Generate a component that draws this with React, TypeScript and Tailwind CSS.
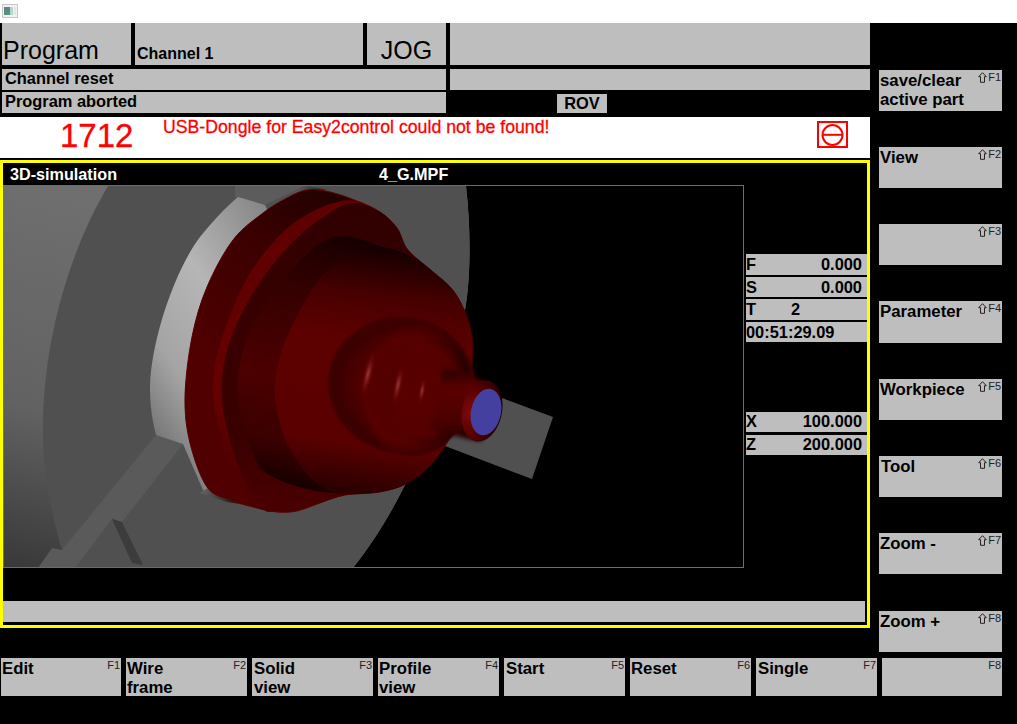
import React from 'react';

const font = 'font-["Liberation_Sans",Arial,sans-serif]';

const sideKeys = [
  { tag: 'F1', lines: ['save/clear', 'active part'], box: 'mt-[47px] h-[41px] pl-px' },
  { tag: 'F2', lines: ['View'], box: 'mt-[36px] h-[41px] pl-px' },
  { tag: 'F3', lines: [], box: 'mt-[36px] h-[41px] pl-px' },
  { tag: 'F4', lines: ['Parameter'], box: 'mt-[36px] h-[42px] pl-px' },
  { tag: 'F5', lines: ['Workpiece'], box: 'mt-[36px] h-[41px] pl-px' },
  { tag: 'F6', lines: ['Tool'], box: 'mt-[36px] h-[41px] pl-[2px]' },
  { tag: 'F7', lines: ['Zoom -'], box: 'mt-[36px] h-[41px] pl-px' },
  { tag: 'F8', lines: ['Zoom +'], box: 'mt-[37px] h-[41px] pl-px' },
];

const bottomKeys = [
  { tag: 'F1', lines: ['Edit'], box: 'w-[120px] pl-px' },
  { tag: 'F2', lines: ['Wire', 'frame'], box: 'w-[121px] pl-px' },
  { tag: 'F3', lines: ['Solid', 'view'], box: 'w-[121px] pl-[2px]' },
  { tag: 'F4', lines: ['Profile', 'view'], box: 'w-[121px] pl-px' },
  { tag: 'F5', lines: ['Start'], box: 'w-[121px] pl-[2px]' },
  { tag: 'F6', lines: ['Reset'], box: 'w-[121px] pl-px' },
  { tag: 'F7', lines: ['Single'], box: 'w-[121px] pl-[2px]' },
  { tag: 'F8', lines: [], box: 'w-[120px] pl-px' },
];

// closed smooth outline through the given points (catmull-rom)
const smooth = (pts: number[][]) => {
  const n = pts.length;
  let d = `M${pts[0][0]} ${pts[0][1]}`;
  for (let i = 0; i < n; i++) {
    const p0 = pts[(i - 1 + n) % n];
    const p1 = pts[i];
    const p2 = pts[(i + 1) % n];
    const p3 = pts[(i + 2) % n];
    const c1x = p1[0] + (p2[0] - p0[0]) / 6;
    const c1y = p1[1] + (p2[1] - p0[1]) / 6;
    const c2x = p2[0] - (p3[0] - p1[0]) / 6;
    const c2y = p2[1] - (p3[1] - p1[1]) / 6;
    d += ` C${c1x} ${c1y} ${c2x} ${c2y} ${p2[0]} ${p2[1]}`;
  }
  return d + ' Z';
};

const flangePts = [[307, 190], [330, 192], [357, 201], [380, 212], [397, 228], [408, 250], [432, 271], [455, 293], [470, 327], [472, 363], [465, 397], [450, 437], [430, 465], [408, 483], [380, 492], [345, 495], [320, 503], [297, 511], [277, 512], [257, 508], [230, 500], [207, 487], [190, 443], [185, 397], [192, 337], [207, 287], [233, 240], [263, 213], [287, 198]];
const stripPts = [[337, 202], [357, 201], [380, 212], [397, 228], [408, 250], [432, 271], [455, 293], [470, 327], [472, 363], [450, 437], [408, 483], [345, 495], [297, 510], [277, 511], [253, 505], [233, 473], [217, 420], [213, 380], [223, 335], [247, 278], [280, 235], [310, 213]];
const bandPts = [[352, 203], [380, 212], [397, 228], [408, 250], [432, 271], [455, 293], [470, 327], [472, 363], [450, 437], [408, 483], [345, 495], [297, 510], [277, 511], [262, 508], [240, 470], [225, 420], [222, 380], [232, 335], [260, 282], [293, 242], [322, 218]];
const innerPts = [[343, 236], [377, 245], [410, 262], [440, 300], [472, 363], [450, 437], [408, 483], [333, 493], [273, 477], [253, 453], [237, 393], [248, 335], [267, 302], [290, 272], [318, 245]];
const conePts = [[380, 247], [350, 254], [322, 276], [300, 310], [284, 345], [276, 375], [276, 405], [287, 443], [310, 477], [337, 493], [380, 492], [408, 483], [430, 465], [450, 437], [465, 397], [472, 363], [470, 327], [455, 293], [432, 271], [408, 255]];

const ShiftArrow = () => (
  <svg className="mr-px" width="9" height="11" viewBox="0 0 9 11">
    <path d="M4.5 0.7 L8.3 4.7 H6.5 V10.3 H2.5 V4.7 H0.7 Z" fill="none" stroke="#222" strokeWidth="1" />
  </svg>
);

const SoftKey: React.FC<{ tag: string; lines: string[]; box: string; shift?: boolean }> = ({ tag, lines, box, shift }) => (
  <div className={`relative bg-[#bebebe] pt-px text-[16.8px] font-bold leading-[19px] text-black ${box}`}>
    {lines.map(l => (
      <div key={l}>{l}</div>
    ))}
    <div className="absolute right-px top-px flex items-center text-[11px] font-normal leading-[12px] text-[#222]">
      {shift && <ShiftArrow />}
      {tag}
    </div>
  </div>
);

const DataRow: React.FC<{ name: string; value?: string; box: string }> = ({ name, value, box }) => (
  <div className={`flex items-center justify-between bg-[#bebebe] pr-[5px] text-[16.4px] font-bold text-black ${box}`}>
    <span>{name}</span>
    <span>{value}</span>
  </div>
);

const Scene = () => (
  <svg className="block" width="739" height="381" viewBox="4 186 739 381">
    <defs>
      <linearGradient id="outer" x1="0.3" y1="0" x2="0" y2="1">
        <stop offset="0" stopColor="#707070" />
        <stop offset="0.6" stopColor="#626262" />
        <stop offset="1" stopColor="#383838" />
      </linearGradient>
      <linearGradient id="ring" x1="0.95" y1="0" x2="0.25" y2="1">
        <stop offset="0" stopColor="#7c7c7c" />
        <stop offset="0.45" stopColor="#b6b6b6" />
        <stop offset="0.75" stopColor="#a4a4a4" />
        <stop offset="1" stopColor="#707070" />
      </linearGradient>
      <linearGradient id="wedge" x1="0" y1="0" x2="1" y2="0.2">
        <stop offset="0" stopColor="#6a6a6a" />
        <stop offset="1" stopColor="#1c1c1c" />
      </linearGradient>
      <linearGradient id="flange" x1="0.65" y1="0" x2="0.2" y2="0.6">
        <stop offset="0" stopColor="#1a0000" />
        <stop offset="0.5" stopColor="#3c0000" />
        <stop offset="1" stopColor="#500000" />
      </linearGradient>
      <linearGradient id="strip" x1="0.5" y1="0" x2="0.5" y2="1">
        <stop offset="0" stopColor="#5e0000" />
        <stop offset="0.6" stopColor="#660000" />
        <stop offset="0.85" stopColor="#520000" />
        <stop offset="1" stopColor="#4a0000" />
      </linearGradient>
      <linearGradient id="band" x1="0.5" y1="0" x2="0.4" y2="1">
        <stop offset="0" stopColor="#300000" />
        <stop offset="0.4" stopColor="#380000" />
        <stop offset="0.8" stopColor="#3a0000" />
        <stop offset="1" stopColor="#4a0000" />
      </linearGradient>
      <linearGradient id="inner" x1="0.6" y1="0" x2="0.4" y2="1">
        <stop offset="0" stopColor="#140000" />
        <stop offset="0.25" stopColor="#340000" />
        <stop offset="0.6" stopColor="#4c0000" />
        <stop offset="0.85" stopColor="#3a0000" />
        <stop offset="1" stopColor="#180000" />
      </linearGradient>
      <linearGradient id="cone" x1="0.55" y1="0" x2="0.45" y2="1">
        <stop offset="0" stopColor="#140000" />
        <stop offset="0.2" stopColor="#480000" />
        <stop offset="0.38" stopColor="#5e0000" />
        <stop offset="0.8" stopColor="#5a0000" />
        <stop offset="1" stopColor="#2a0000" />
      </linearGradient>
      <radialGradient id="dish" cx="0.5" cy="0.5" r="0.5">
        <stop offset="0" stopColor="#500000" />
        <stop offset="0.45" stopColor="#5a0000" />
        <stop offset="0.75" stopColor="#440000" />
        <stop offset="0.9" stopColor="#3a0000" />
        <stop offset="1" stopColor="#3e0000" />
      </radialGradient>
      <radialGradient id="ridge1" cx="0.42" cy="0.5" r="0.72">
        <stop offset="0" stopColor="#500000" />
        <stop offset="0.55" stopColor="#560000" />
        <stop offset="0.72" stopColor="#3c0000" />
        <stop offset="0.85" stopColor="#1c0000" />
      </radialGradient>
      <radialGradient id="ridge2" cx="0.35" cy="0.5" r="0.72">
        <stop offset="0" stopColor="#5a0000" />
        <stop offset="0.6" stopColor="#560000" />
        <stop offset="0.76" stopColor="#3a0000" />
        <stop offset="0.9" stopColor="#1a0000" />
      </radialGradient>
      <linearGradient id="neck" x1="0.2" y1="0" x2="0.3" y2="1">
        <stop offset="0" stopColor="#240000" />
        <stop offset="0.3" stopColor="#5a0000" />
        <stop offset="0.75" stopColor="#4a0000" />
        <stop offset="1" stopColor="#200000" />
      </linearGradient>
      <radialGradient id="rim" cx="0.2" cy="0.55" r="0.85">
        <stop offset="0" stopColor="#7c0a0a" />
        <stop offset="0.45" stopColor="#5a0000" />
        <stop offset="1" stopColor="#1c0000" />
      </radialGradient>
      <radialGradient id="shine" cx="0.5" cy="0.5" r="0.5">
        <stop offset="0" stopColor="#9a3a3a" />
        <stop offset="0.5" stopColor="#7a1414" stopOpacity="0.6" />
        <stop offset="1" stopColor="#600000" stopOpacity="0" />
      </radialGradient>
      <filter id="soft" x="-20%" y="-20%" width="140%" height="140%">
        <feGaussianBlur stdDeviation="2" />
      </filter>
      <filter id="softer" x="-20%" y="-20%" width="140%" height="140%">
        <feGaussianBlur stdDeviation="1" />
      </filter>
    </defs>

    {/* tool */}
    <polygon points="502,398 553,417 532,479 445,446 470,400" fill="#505050" />

    {/* chuck body */}
    <path d="M3 186 L466 186 C472 240 470 290 463 320 C445 410 400 510 353 568 L3 568 Z" fill="url(#outer)" />
    <path d="M108 186 L466 186 C472 240 470 290 463 320 C445 410 400 510 353 568 L75 568 L62 550 C47 500 43 460 43 430 C43 340 70 250 108 186 Z" fill="#505050" />

    {/* jaws */}
    <polygon points="235,186 305,186 264,205 235,197" fill="#5c5c5c" />
    <polygon points="293,193 307,186 327,190" fill="url(#wedge)" />
    <polygon points="156,435 183,444 122,522 112,519 75,568 38,568 52,548 62,550" fill="#5a5a5a" />
    <polygon points="112,519 122,522 143,565 132,563" fill="#3c3c3c" />

    {/* light ring */}
    <path d="M238 197 L265 205 L290 260 L230 460 L210 495 L203 490 L183 444 L156 435 C151 415 150 400 150 387 C151 340 175 270 200 237 C212 222 225 208 238 197 Z" fill="url(#ring)" />
    <polygon points="200,493 208,488 240,504 227,502" fill="url(#wedge)" />

    {/* workpiece, back to front */}
    <path d={smooth(flangePts)} fill="url(#flange)" stroke="#5c0000" strokeWidth="1" />
    <path d={smooth(stripPts)} fill="url(#strip)" />
    <path d={smooth(bandPts)} fill="url(#band)" />
    <path d={smooth(innerPts)} fill="url(#inner)" />
    <path d={smooth(conePts)} fill="url(#cone)" />

    {/* rounded nose */}
    <ellipse cx="402" cy="385" rx="74" ry="68" transform="rotate(8 402 385)" fill="url(#dish)" filter="url(#softer)" />
    <ellipse cx="416" cy="390" rx="54" ry="66" transform="rotate(8 416 390)" fill="url(#ridge1)" filter="url(#softer)" />
    <ellipse cx="432" cy="392" rx="38" ry="52" transform="rotate(8 432 392)" fill="url(#ridge2)" filter="url(#softer)" />
    <ellipse cx="368" cy="374" rx="5" ry="24" transform="rotate(14 368 374)" fill="url(#shine)" />
    <ellipse cx="398" cy="385" rx="4.5" ry="21" transform="rotate(12 398 385)" fill="url(#shine)" />
    <ellipse cx="422" cy="391" rx="3.5" ry="13" transform="rotate(10 422 391)" fill="url(#shine)" />

    <path d="M444 368 C455 370 470 375 490 384 L482 441 C465 440 450 434 430 428 Z" fill="url(#neck)" filter="url(#soft)" />
    <ellipse cx="482" cy="411" rx="20" ry="31" transform="rotate(12 482 411)" fill="url(#rim)" />
    <ellipse cx="486" cy="412" rx="15" ry="23.5" transform="rotate(12 486 412)" fill="#44409f" />
  </svg>
);

export default function App() {
  return (
    <div className={`flex h-[724px] w-[1017px] flex-col overflow-hidden bg-black ${font}`}>
      {/* window title bar */}
      <div className="flex h-[23px] items-start bg-white pl-[2px] pt-[4px]">
        <svg width="16" height="14" viewBox="0 0 16 14">
          <defs>
            <linearGradient id="appIcon" x1="0" y1="0" x2="0" y2="1">
              <stop offset="0" stopColor="#5f7f9a" />
              <stop offset="1" stopColor="#4f9a78" />
            </linearGradient>
          </defs>
          <rect x="0.5" y="0.5" width="15" height="13" fill="#f2f2f2" stroke="#c8c8c8" />
          <rect x="2" y="3" width="6" height="8" fill="url(#appIcon)" />
          <rect x="8" y="3" width="3" height="8" fill="#b6d6c4" />
          <rect x="12" y="3" width="2" height="8" fill="#dbe8ec" />
        </svg>
      </div>

      <div className="flex h-[635px]">
        {/* left column */}
        <div className="w-[870px]">
          <div className="flex h-[42px] gap-1 pl-[2px] text-black">
            <div className="flex w-[129px] items-end bg-[#bebebe] pb-px pl-px text-[25px] leading-[28px]">Program</div>
            <div className="flex w-[228px] items-end bg-[#bebebe] pb-[2px] pl-[2px] text-[16px] font-bold leading-[18px]">Channel 1</div>
            <div className="flex w-[79px] items-end justify-center bg-[#bebebe] pb-px text-[25px] leading-[28px]">JOG</div>
            <div className="w-[420px] bg-[#bebebe]" />
          </div>
          <div className="mt-1 flex h-[21px] gap-1 pl-[2px]">
            <div className="w-[444px] bg-[#bebebe] pl-[3px] text-[16.4px] font-bold leading-[19px] text-black">Channel reset</div>
            <div className="w-[420px] bg-[#bebebe]" />
          </div>
          <div className="mt-[2px] flex h-[21px] pl-[2px]">
            <div className="w-[444px] bg-[#bebebe] pl-[3px] text-[16.4px] font-bold leading-[18px] text-black">Program aborted</div>
            <div className="ml-[111px] mt-[2px] h-[19px] w-[50px] bg-[#bebebe] text-center text-[16.4px] font-bold leading-[19px] text-black">ROV</div>
          </div>

          {/* alarm line */}
          <div className="mt-1 flex h-[41px] bg-white text-[#ff0000]">
            <div className="ml-[60px] mt-[1px] w-[103px] text-[33px] leading-[36px] [-webkit-text-stroke:0.3px_#ff0000]">1712</div>
            <div className="mt-[1px] w-[654px] text-[17.7px] leading-[18px] [-webkit-text-stroke:0.3px_#ff0000]">USB-Dongle for Easy2control could not be found!</div>
            <div className="mt-[4px] flex h-[27px] w-[31px] items-center justify-center border-2 border-[#ff0000]">
              <svg width="23" height="22" viewBox="0 0 23 22">
                <circle cx="11.5" cy="11" r="10" fill="none" stroke="#ff0000" strokeWidth="2" />
                <rect x="1" y="9.8" width="21" height="2" fill="#ff0000" />
              </svg>
            </div>
          </div>

          {/* simulation frame */}
          <div className="mt-[2px] h-[468px] border-[3px] border-[#ffff00]">
            <div className="flex h-[22px] text-[16.2px] font-bold leading-[22px] text-white">
              <div className="w-[376px] pl-[7px]">3D-simulation</div>
              <div>4_G.MPF</div>
            </div>
            <div className="flex h-[383px]">
              <div className="h-[383px] w-[741px] border border-[#6c6c6c]">
                <Scene />
              </div>
              <div className="ml-[2px] w-[121px]">
                <DataRow name="F" value="0.000" box="mt-[69px] h-[21px]" />
                <DataRow name="S" value="0.000" box="mt-[2px] h-[20px]" />
                <div className="mt-[2px] flex h-[21px] items-center bg-[#bebebe] text-[16.4px] font-bold text-black">
                  <span className="w-[45px]">T</span>
                  <span>2</span>
                </div>
                <DataRow name="00:51:29.09" box="mt-[2px] h-[20px]" />
                <DataRow name="X" value="100.000" box="mt-[70px] h-[20px] pb-[2px]" />
                <DataRow name="Z" value="200.000" box="mt-[3px] h-[20px] pb-[2px]" />
              </div>
            </div>
            <div className="mt-[33px] h-[21px] w-[862px] bg-[#bebebe]" />
          </div>
        </div>

        {/* vertical softkeys */}
        <div className="ml-[9px] w-[123px]">
          {sideKeys.map(k => (
            <SoftKey key={k.tag} tag={k.tag} lines={k.lines} box={k.box} shift />
          ))}
        </div>
      </div>

      {/* horizontal softkeys */}
      <div className="flex h-[38px] gap-[5px] pl-px">
        {bottomKeys.map(k => (
          <SoftKey key={k.tag} tag={k.tag} lines={k.lines} box={k.box} />
        ))}
      </div>
    </div>
  );
}
